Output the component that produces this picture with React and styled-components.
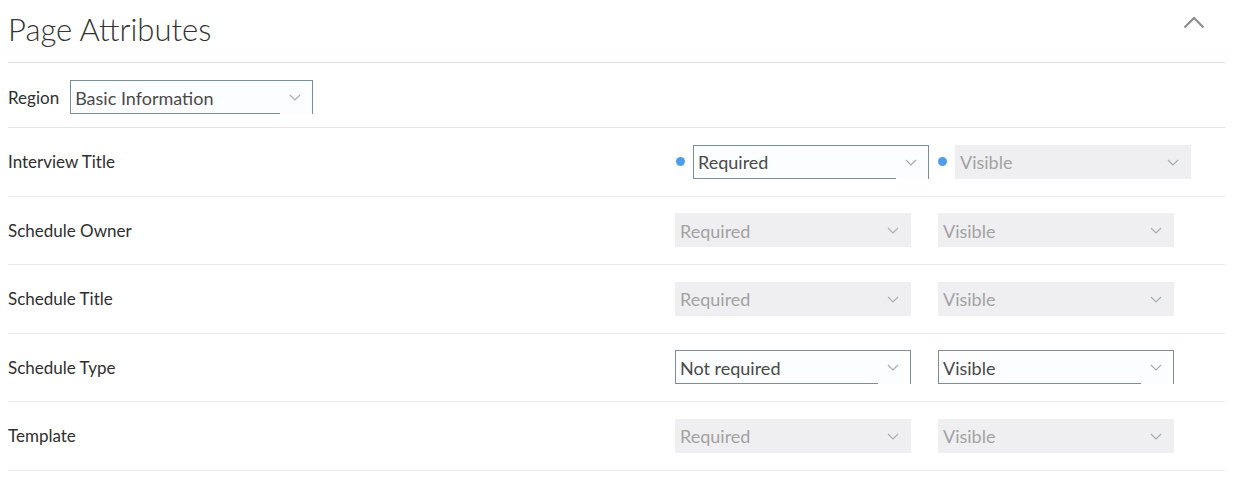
import React from 'react'
import styled, { createGlobalStyle } from 'styled-components'

const GlobalStyle = createGlobalStyle`
  body {
    margin: 0;
    background: #ffffff;
    font-family: Lato, "Noto Sans", sans-serif;
    color: #333333;
  }
`

const Panel = styled.section`
  padding: 0 8px;
`

const Header = styled.header`
  display: flex;
  justify-content: space-between;
  align-items: center;
  height: 62px;
  border-bottom: 1px solid #d8e0e7;
`

const Title = styled.h1`
  margin: 0;
  font-size: 31px;
  font-weight: 300;
  color: #333333;
  padding-bottom: 5px;
`

const Collapse = styled.button`
  border: 0;
  background: none;
  padding: 0;
  margin-right: 20px;
  margin-bottom: 16px;
  width: 22px;
  height: 14px;
  display: flex;
  cursor: pointer;
`

const RegionRow = styled.div`
  display: flex;
  align-items: center;
  gap: 11px;
  box-sizing: border-box;
  height: 65px;
  padding-top: 4px;
  border-bottom: 1px solid #e3e3e3;
`

const Row = styled.div`
  display: grid;
  grid-template-columns: 667px 1fr;
  align-items: center;
  height: 67.5px;
  border-bottom: 1px solid #e9e9e9;
`

const Label = styled.span`
  font-size: 17px;
  color: #2f2f2f;
`

const Controls = styled.div`
  display: flex;
  align-items: center;
  gap: ${props => (props.marked ? '8px' : '27px')};
`

const Cell = styled.div`
  display: flex;
  align-items: center;
  gap: 8px;
`

const Dot = styled.span`
  width: 9px;
  height: 9px;
  border-radius: 50%;
  background: #4d9de8;
  flex: none;
  margin-left: 1px;
`

const SelectBox = styled.div`
  display: flex;
  align-items: stretch;
  box-sizing: border-box;
  width: ${props => props.width || 236}px;
  height: 34px;
  background: ${props => (props.disabled ? '#efeff1' : '#fcfdfe')};
  border: 1px solid ${props => (props.disabled ? '#efeff1' : '#7c8d99')};
  border-bottom: 0;
`

const Value = styled.span`
  flex: 1;
  display: flex;
  align-items: center;
  margin-left: -1px;
  padding-left: 5px;
  font-size: 18px;
  color: ${props => (props.disabled ? '#a2a2a2' : '#4a4a4a')};
  box-shadow: inset 0 -1px 0 ${props => (props.disabled ? '#efeff1' : '#7c8d99')};
`

const Arrow = styled.span`
  box-sizing: border-box;
  width: 32px;
  display: flex;
  align-items: center;
  justify-content: flex-end;
  padding-right: 11px;
`

function Chevron() {
  return (
    <svg width="12" height="7" viewBox="0 0 12 7">
      <path d="M1 1l5 5 5-5" fill="none" stroke="#a8adb2" strokeWidth="1.2" />
    </svg>
  )
}

function Select({ value, disabled, width }) {
  return (
    <SelectBox disabled={disabled} width={width}>
      <Value disabled={disabled}>{value}</Value>
      <Arrow>
        <Chevron />
      </Arrow>
    </SelectBox>
  )
}

const fields = [
  { name: 'Interview Title', required: 'Required', visible: 'Visible', active: 0, marked: true },
  { name: 'Schedule Owner', required: 'Required', visible: 'Visible', active: -1 },
  { name: 'Schedule Title', required: 'Required', visible: 'Visible', active: -1 },
  { name: 'Schedule Type', required: 'Not required', visible: 'Visible', active: 2 },
  { name: 'Template', required: 'Required', visible: 'Visible', active: -1 }
]

export default function App() {
  return (
    <Panel>
      <GlobalStyle />
      <Header>
        <Title>Page Attributes</Title>
        <Collapse aria-label="Collapse">
          <svg width="22" height="14" viewBox="0 0 22 14">
            <path d="M1.5 11.5L11 2l9.5 9.5" fill="none" stroke="#8a8a8a" strokeWidth="2" />
          </svg>
        </Collapse>
      </Header>
      <RegionRow>
        <Label>Region</Label>
        <Select value="Basic Information" width={243} />
      </RegionRow>
      {fields.map(field => (
        <Row key={field.name}>
          <Label>{field.name}</Label>
          <Controls marked={field.marked}>
            <Cell>
              {field.marked && <Dot />}
              <Select value={field.required} disabled={!(field.active === 0 || field.active === 2)} />
            </Cell>
            <Cell>
              {field.marked && <Dot />}
              <Select value={field.visible} disabled={field.active !== 2} />
            </Cell>
          </Controls>
        </Row>
      ))}
    </Panel>
  )
}
